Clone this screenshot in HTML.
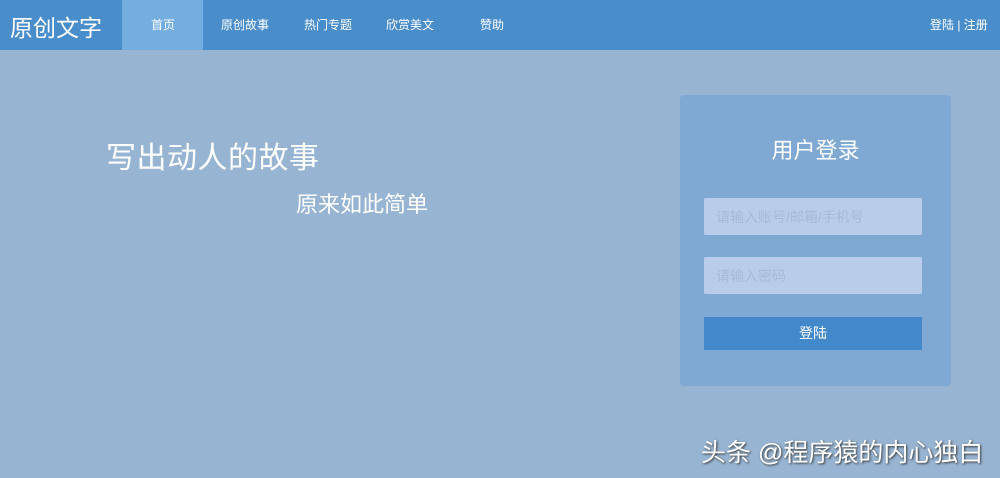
<!DOCTYPE html>
<html><head><meta charset="utf-8"><style>
*{margin:0;padding:0;box-sizing:border-box}
body{width:1000px;height:478px;overflow:hidden;background:#97b4d2;font-family:"Liberation Sans","Noto Sans CJK SC",sans-serif;position:relative;color:#fff}
.nav{position:absolute;left:0;top:0;width:1000px;height:50px;background:#4a8dcb}
.logo{position:absolute;left:10px;top:9px;font-size:23px}
.act{position:absolute;left:122px;top:0;width:81px;height:50px;background:#74ade0}
.ni{position:absolute;top:16px;font-size:12px}
.box{position:absolute;left:680px;top:95px;width:271px;height:291px;background:#7fa8d3;border-radius:4px}
.in{position:absolute;left:704px;width:218px;height:37px;background:#b9cdea;border-radius:2px;color:#a6bad6;font-size:14px;padding:9px 12px}
.btn{position:absolute;left:704px;top:317px;width:218px;height:33px;background:#4388cb;font-size:14px;text-align:center;line-height:33px}
</style></head><body>
<div class="nav"><div class="logo">原创文字</div><div class="act"></div>
<div class="ni" style="left:151px">首页</div><div class="ni" style="left:221px">原创故事</div><div class="ni" style="left:304px">热门专题</div><div class="ni" style="left:386px">欣赏美文</div><div class="ni" style="left:480px">赞助</div>
<div class="ni" style="left:930px">登陆 | 注册</div></div>
<div style="position:absolute;left:106px;top:133px;font-size:30px;letter-spacing:0.5px">写出动人的故事</div>
<div style="position:absolute;left:296px;top:187px;font-size:22px">原来如此简单</div>
<div class="box"></div>
<div style="position:absolute;left:680px;width:271px;top:133px;text-align:center;font-size:22px">用户登录</div>
<div class="in" style="top:198px">请输入账号/邮箱/手机号</div>
<div class="in" style="top:257px">请输入密码</div>
<div class="btn">登陆</div>
<div style="position:absolute;left:701px;top:433px;font-size:25px;text-shadow:1px 1px 2px #333">头条 @程序猿的内心独白</div>
</body></html>
